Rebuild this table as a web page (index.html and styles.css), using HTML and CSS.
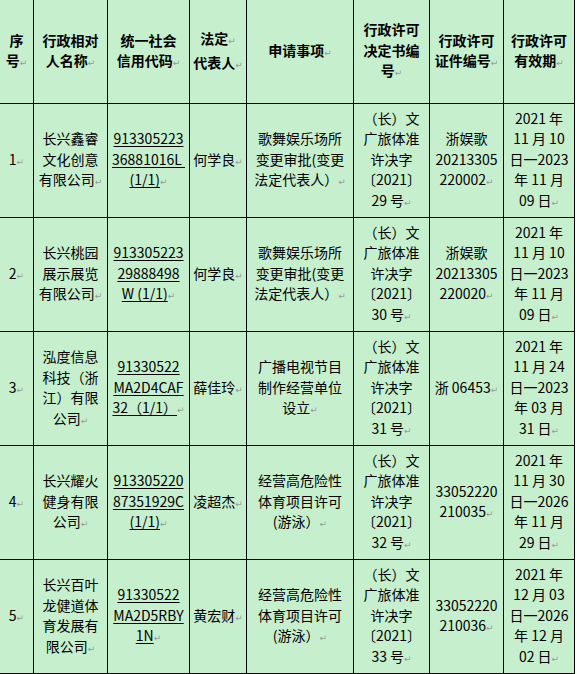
FILE: index.html
```html
<!DOCTYPE html>
<html lang="zh-CN">
<head>
<meta charset="utf-8">
<title>行政许可公示</title>
<link rel="stylesheet" href="styles.css">
</head>
<body>
<div class="grid">
  <div class="c h"><p class="t">序<br>号<span class="pm">↵</span></p></div>
  <div class="c h"><p class="t">行政相对<br>人名称<span class="pm">↵</span></p></div>
  <div class="c h"><p class="t">统一社会<br>信用代码<span class="pm">↵</span></p></div>
  <div class="c h"><p class="t">法定<span class="pm">↵</span><br>代表人<span class="pm">↵</span></p></div>
  <div class="c h"><p class="t">申请事项<span class="pm">↵</span></p></div>
  <div class="c h"><p class="t">行政许可<br>决定书编<br>号<span class="pm">↵</span></p></div>
  <div class="c h"><p class="t">行政许可<br>证件编号<span class="pm">↵</span></p></div>
  <div class="c h"><p class="t">行政许可<br>有效期<span class="pm">↵</span></p></div>

  <div class="c"><p class="t">1<span class="pm">↵</span></p></div>
  <div class="c"><p class="t">长兴鑫睿<br>文化创意<br>有限公司<span class="pm">↵</span></p></div>
  <div class="c"><p class="t"><span class="u">913305223<br>36881016L&nbsp;<br>(1/1)</span><span class="pm">↵</span></p></div>
  <div class="c"><p class="t">何学良<span class="pm">↵</span></p></div>
  <div class="c"><p class="t">歌舞娱乐场所<br>变更审批(变更<br>法定代表人）<span class="pm">↵</span></p></div>
  <div class="c"><p class="t">（长）文<br>广旅体准<br>许决字<br>〔2021〕<br>29 号<span class="pm">↵</span></p></div>
  <div class="c"><p class="t">浙娱歌<br>20213305<br>220002<span class="pm">↵</span></p></div>
  <div class="c"><p class="t">2021 年<br>11 月 10<br>日一2023<br>年 11 月<br>09 日<span class="pm">↵</span></p></div>

  <div class="c"><p class="t">2<span class="pm">↵</span></p></div>
  <div class="c"><p class="t">长兴桃园<br>展示展览<br>有限公司<span class="pm">↵</span></p></div>
  <div class="c"><p class="t"><span class="u">913305223<br>29888498<br>W (1/1)</span><span class="pm">↵</span></p></div>
  <div class="c"><p class="t">何学良<span class="pm">↵</span></p></div>
  <div class="c"><p class="t">歌舞娱乐场所<br>变更审批(变更<br>法定代表人）<span class="pm">↵</span></p></div>
  <div class="c"><p class="t">（长）文<br>广旅体准<br>许决字<br>〔2021〕<br>30 号<span class="pm">↵</span></p></div>
  <div class="c"><p class="t">浙娱歌<br>20213305<br>220020<span class="pm">↵</span></p></div>
  <div class="c"><p class="t">2021 年<br>11 月 10<br>日一2023<br>年 11 月<br>09 日<span class="pm">↵</span></p></div>

  <div class="c"><p class="t">3<span class="pm">↵</span></p></div>
  <div class="c"><p class="t">泓度信息<br>科技（浙<br>江）有限<br>公司<span class="pm">↵</span></p></div>
  <div class="c"><p class="t"><span class="u">91330522<br>MA2D4CAF<br>32（1/1）</span><span class="pm">↵</span></p></div>
  <div class="c"><p class="t">薛佳玲<span class="pm">↵</span></p></div>
  <div class="c"><p class="t">广播电视节目<br>制作经营单位<br>设立<span class="pm">↵</span></p></div>
  <div class="c"><p class="t">（长）文<br>广旅体准<br>许决字<br>〔2021〕<br>31 号<span class="pm">↵</span></p></div>
  <div class="c"><p class="t">浙 06453<span class="pm">↵</span></p></div>
  <div class="c"><p class="t">2021 年<br>11 月 24<br>日一2023<br>年 03 月<br>31 日<span class="pm">↵</span></p></div>

  <div class="c"><p class="t">4<span class="pm">↵</span></p></div>
  <div class="c"><p class="t">长兴耀火<br>健身有限<br>公司<span class="pm">↵</span></p></div>
  <div class="c"><p class="t"><span class="u">913305220<br>87351929C<br>(1/1)</span><span class="pm">↵</span></p></div>
  <div class="c"><p class="t">凌超杰<span class="pm">↵</span></p></div>
  <div class="c"><p class="t">经营高危险性<br>体育项目许可<br>(游泳）<span class="pm">↵</span></p></div>
  <div class="c"><p class="t">（长）文<br>广旅体准<br>许决字<br>〔2021〕<br>32 号<span class="pm">↵</span></p></div>
  <div class="c"><p class="t">33052220<br>210035<span class="pm">↵</span></p></div>
  <div class="c"><p class="t">2021 年<br>11 月 30<br>日一2026<br>年 11 月<br>29 日<span class="pm">↵</span></p></div>

  <div class="c"><p class="t">5<span class="pm">↵</span></p></div>
  <div class="c"><p class="t">长兴百叶<br>龙健道体<br>育发展有<br>限公司<span class="pm">↵</span></p></div>
  <div class="c"><p class="t"><span class="u">91330522<br>MA2D5RBY<br>1N</span><span class="pm">↵</span></p></div>
  <div class="c"><p class="t">黄宏财<span class="pm">↵</span></p></div>
  <div class="c"><p class="t">经营高危险性<br>体育项目许可<br>(游泳）<span class="pm">↵</span></p></div>
  <div class="c"><p class="t">（长）文<br>广旅体准<br>许决字<br>〔2021〕<br>33 号<span class="pm">↵</span></p></div>
  <div class="c"><p class="t">33052220<br>210036<span class="pm">↵</span></p></div>
  <div class="c"><p class="t">2021 年<br>12 月 03<br>日一2026<br>年 12 月<br>02 日<span class="pm">↵</span></p></div>
</div>
</body>
</html>
```

FILE: styles.css
```css
html, body {
  margin: 0;
  padding: 0;
  background: #ffffff;
}

body {
  font-family: "Noto Sans CJK SC", sans-serif;
  font-size: 14px;
  color: #000;
}

.grid {
  display: grid;
  grid-template-columns: 34px 74px 82px 57px 107px 76px 74px 71px;
  grid-template-rows: 104px repeat(5, 114px);
  width: 575px;
  background: #c6efce;
}

.c {
  box-sizing: border-box;
  border-right: 1px solid #000;
  border-bottom: 1px solid #000;
  display: flex;
  align-items: center;
  justify-content: center;
  padding: 0 1px;
}

.t {
  margin: 0;
  text-align: center;
  line-height: 20.5px;
  white-space: nowrap;
}

.h {
  font-weight: 700;
}

.u {
  text-decoration: underline;
  text-underline-offset: 2px;
}

.pm {
  color: #9a9a9a;
  font-family: "DejaVu Sans", sans-serif;
  font-size: 9px;
  font-weight: 400;
}
```
